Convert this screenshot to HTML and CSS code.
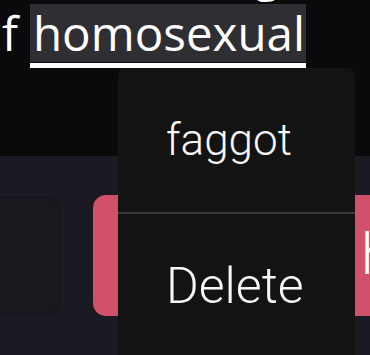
FILE: index.html
```html
<!DOCTYPE html>
<html>
<head>
<meta charset="utf-8">
<link rel="stylesheet" href="styles.css">
</head>
<body>
<div class="screen">
  <section class="editor">
    <div class="lines">
      <div class="line prev"><span class="prev-g">g</span></div>
      <div class="line current">
        <span class="word">f</span>
        <span class="sel">
          <span class="sel-text">homosexual</span>
          <span class="sel-bar"></span>
        </span>
      </div>
    </div>
  </section>
  <section class="actions">
    <div class="card"></div>
    <div class="btn"><span class="btn-label">h</span></div>
  </section>
  <div class="menu">
    <div class="menu-item suggestion">faggot</div>
    <div class="menu-divider"></div>
    <div class="menu-item">Delete</div>
  </div>
</div>
</body>
</html>
```
FILE: styles.css
```css
html, body {
  margin: 0;
  padding: 0;
  width: 370px;
  height: 355px;
  overflow: hidden;
  background: #1b1a22;
}
.screen {
  position: relative;
  width: 370px;
  height: 355px;
  overflow: hidden;
  display: flex;
  flex-direction: column;
}
.editor {
  height: 156px;
  background: #0a0a0c;
  overflow: hidden;
  flex: none;
}
.lines {
  margin-top: -56px;
  display: flex;
  flex-direction: column;
  gap: 2px;
  font-family: "Open Sans", "Noto Sans", sans-serif;
  font-size: 47.5px;
  color: #ffffff;
}
.line {
  height: 58px;
  line-height: 58px;
  display: flex;
  align-items: flex-start;
  white-space: pre;
}
.prev-g {
  padding-left: 254px;
}
.current {
  padding-left: 2px;
  gap: 12px;
}
.sel {
  display: inline-flex;
  flex-direction: column;
}
.sel-text {
  background: #2f2f33;
  line-height: 58px;
  height: 58px;
  padding: 0 1px 0 3px;
}
.sel-bar {
  height: 5px;
  margin-top: 1px;
  background: #ffffff;
}
.actions {
  flex: 1;
  display: flex;
  align-items: flex-start;
  padding-top: 39px;
  gap: 33px;
}
.card {
  flex: none;
  width: 78px;
  height: 115px;
  margin-left: -20px;
  margin-top: 2px;
  border: 1px solid #131219;
  border-radius: 11px;
  background: #19181f;
}
.btn {
  flex: none;
  width: 320px;
  height: 121px;
  border-radius: 13px;
  background: #d1506a;
  display: flex;
  align-items: center;
  font-family: Roboto, "Noto Sans", sans-serif;
  font-size: 58px;
  font-weight: 300;
  color: #ffffff;
}
.btn-label {
  padding-left: 268px;
  margin-top: -4px;
}
.menu {
  position: absolute;
  left: 118px;
  top: 68px;
  width: 237px;
  height: 310px;
  background: #131313;
  border-radius: 7px;
  display: flex;
  flex-direction: column;
  font-family: Roboto, "Noto Sans", sans-serif;
  font-size: 50px;
  font-weight: 300;
  color: #f7f7f7;
}
.menu-item {
  height: 144px;
  display: flex;
  align-items: center;
  padding-left: 48px;
  flex: none;
}
.suggestion {
  font-size: 44px;
}
.menu-divider {
  height: 2px;
  background: #383838;
  flex: none;
}
```
